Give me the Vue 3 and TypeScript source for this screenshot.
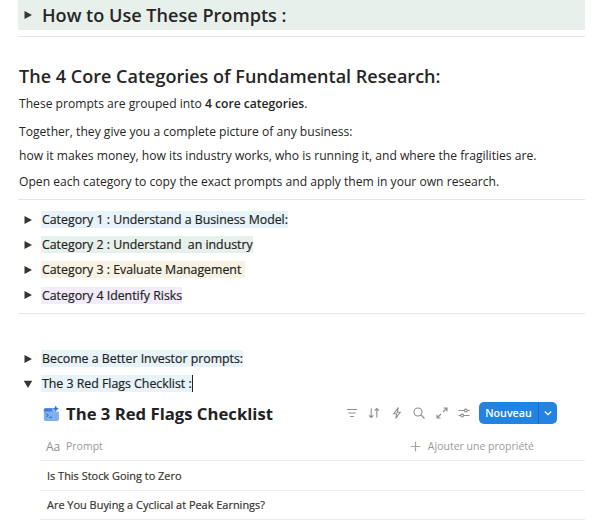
<script setup lang="ts">
const categories = [
  { label: 'Category 1 : Understand a Business Model:', tone: 'blue' },
  { label: 'Category 2 : Understand  an industry', tone: 'green' },
  { label: 'Category 3 : Evaluate Management ', tone: 'yellow' },
  { label: 'Category 4 Identify Risks', tone: 'purple' }
]

const rows = ['Is This Stock Going to Zero', 'Are You Buying a Cyclical at Peak Earnings?']
</script>

<template>
  <div class="page">
    <div class="top-toggle">
      <svg class="arrow" viewBox="0 0 10 10"><path d="M1.500 .9 9 5 1.500 9.100z" /></svg>
      <span>How to Use These Prompts :</span>
    </div>
    <div class="rule first"></div>

    <h2>The 4 Core Categories of Fundamental Research:</h2>
    <p class="p1">These prompts are grouped into <b>4 core categories</b>.</p>
    <p class="p2">Together, they give you a complete picture of any business:</p>
    <p class="p3">how it makes money, how its industry works, who is running it, and where the fragilities are.</p>
    <p class="p4">Open each category to copy the exact prompts and apply them in your own research.</p>
    <div class="rule second"></div>

    <ul class="toggles">
      <li v-for="c in categories" :key="c.label">
        <svg class="arrow" viewBox="0 0 10 10"><path d="M1.500 .9 9 5 1.500 9.100z" /></svg>
        <span class="mark" :class="c.tone">{{ c.label }}</span>
      </li>
    </ul>
    <div class="rule third"></div>

    <ul class="toggles lower">
      <li>
        <svg class="arrow" viewBox="0 0 10 10"><path d="M1.500 .9 9 5 1.500 9.100z" /></svg>
        <span class="mark blue">Become a Better Investor prompts:</span>
      </li>
      <li>
        <svg class="arrow" viewBox="0 0 10 10"><path d="M.8 1.800h8.400L5 9z" /></svg>
        <span class="mark blue caret">The 3 Red Flags Checklist :</span>
      </li>
    </ul>

    <section class="db">
      <div class="db-head">
        <svg class="db-icon" viewBox="0 0 16 16">
          <path d="M2.300 3h7.200l1 1.800c.3.600.8 1 1.500 1.200l2 .4h1v7.100c0 .9-.7 1.500-1.500 1.500H2.300c-.8 0-1.500-.6-1.500-1.500V4.500c0-.8.7-1.500 1.500-1.500z" fill="#7fb0ee" />
          <path d="M2.300 3h6.300v3.200H.8V4.500c0-.8.700-1.500 1.500-1.500z" fill="#3f7fd8" />
          <path d="M12 .5l.9 2.200 2.200.9-2.200.9-.9 2.200-.9-2.200-2.200-.9 2.200-.9z" fill="#2f74d0" />
          <path d="M3.200 8.300 5 9.800l-1.800 1.500M6 11.500h2.500" fill="none" stroke="#1f5fb8" stroke-width=".9" />
        </svg>
        <span class="db-title">The 3 Red Flags Checklist</span>
        <div class="tools">
          <svg viewBox="0 0 14 14"><path d="M2 3.500h10M3.500 7h7M5.200 10.500h3.600" /></svg>
          <svg viewBox="0 0 14 14"><path d="M4.200 2.500v9M2 9.300l2.200 2.200 2.200-2.200M9.800 11.500v-9M7.600 4.700l2.200-2.200 2.200 2.200" /></svg>
          <svg viewBox="0 0 14 14"><path d="M8.300 1.500 3.800 7.800h2.900l-1 4.700 4.500-6.300H7.300z" /></svg>
          <svg viewBox="0 0 14 14"><circle cx="6" cy="6" r="4" /><path d="m9 9 3.500 3.500" /></svg>
          <svg viewBox="0 0 14 14"><path d="M8.500 2H12v3.500M12 2 8 6M5.500 12H2V8.500M2 12l4-4" /></svg>
          <svg viewBox="0 0 14 14"><path d="M1.500 4.500h11M1.500 9.500h11" /><circle cx="8.800" cy="4.500" r="1.400" fill="#fff" /><circle cx="5.200" cy="9.500" r="1.400" fill="#fff" /></svg>
        </div>
        <div class="new-btn">
          <span class="new-label">Nouveau</span>
          <span class="new-drop">
            <svg viewBox="0 0 10 10"><path d="m1.800 3.500 3.200 3.200 3.200-3.200" /></svg>
          </span>
        </div>
      </div>

      <div class="row head-row">
        <span class="aa">Aa</span>
        <span class="col-name">Prompt</span>
        <span class="add">
          <svg viewBox="0 0 12 12"><path d="M6 .8v10.400M.8 6h10.400" /></svg>
          Ajouter une propriété
        </span>
      </div>
      <div v-for="r in rows" :key="r" class="row item">{{ r }}</div>
    </section>
  </div>
</template>

<style>
html, body {
  background: #fff;
  overflow: hidden;
}
</style>

<style scoped>
.page {
  height: 528px;
  overflow: hidden;
  padding: 0 25px 0 18px;
  font-family: "Open Sans", "Noto Sans", sans-serif;
  color: #262625;
  box-sizing: border-box;
}
.arrow {
  width: 10px;
  height: 10px;
  flex: none;
  fill: #37352f;
}
.top-toggle {
  height: 30px;
  background: #e8f0ec;
  display: flex;
  align-items: center;
  padding-left: 5px;
  gap: 9px;
  font-size: 18.100px;
  font-weight: 600;
}
.rule {
  height: 1px;
  background: #e6e6e4;
}
.rule.first { margin-top: 6px; }
h2 {
  margin: 27px 0 0 1px;
  font-size: 18.050px;
  line-height: 24px;
  font-weight: 600;
}
p {
  margin: 0 0 0 1px;
  font-size: 12.120px;
  line-height: 20px;
}
p b { font-weight: 600; }
.p1 { margin-top: 6px; }
.p2 { margin-top: 8px; }
.p3 { margin-top: 4px; }
.p4 { margin-top: 6px; }
.rule.second { margin-top: 7px; }
.toggles {
  list-style: none;
  margin: 7px 0 0;
  padding: 0;
}
.toggles li {
  height: 25.200px;
  display: flex;
  align-items: center;
  padding-left: 5px;
  gap: 8px;
}
.mark {
  padding-left: 1px;
  font-size: 12.340px;
  line-height: 17px;
  color: #1f1f1e;
  -webkit-text-stroke: 0.2px #1f1f1e;
  white-space: pre;
}
.blue { background: #e7f3f8; }
.green { background: #e8f0ec; }
.yellow { background: #f8f2e2; }
.purple { background: #f2ebf8; }
.caret { border-right: 1px solid #222; }
.rule.third { margin-top: 5.200px; }
.toggles.lower { margin-top: 32px; }
.db {
  margin: 2px 0 0 22px;
}
.db-head {
  height: 30px;
  padding-right: 28px;
  display: flex;
  align-items: center;
}
.db-icon {
  width: 17px;
  height: 17px;
  margin-left: 3px;
  flex: none;
}
.db-title {
  margin-left: 6px;
  font-size: 16.700px;
  font-weight: 700;
  color: #222;
}
.tools {
  margin-left: auto;
  display: flex;
  gap: 8.400px;
}
.tools svg {
  width: 14px;
  height: 14px;
  fill: none;
  stroke: #8f8e8b;
  stroke-width: 1.100;
}
.new-btn {
  margin-left: 8px;
  width: 78px;
  height: 22px;
  border-radius: 5px;
  background: #2383e2;
  color: #fff;
  display: flex;
  align-items: center;
  font-size: 10.700px;
  font-weight: 600;
}
.new-label {
  flex: 1;
  text-align: center;
}
.new-drop {
  width: 18px;
  height: 22px;
  border-left: 1px solid #1a6cc0;
  display: flex;
  align-items: center;
  justify-content: center;
}
.new-drop svg {
  width: 10px;
  height: 10px;
  fill: none;
  stroke: #fff;
  stroke-width: 1.200;
}
.row {
  display: flex;
  align-items: center;
  border-bottom: 1px solid #ececea;
  box-sizing: border-box;
}
.head-row {
  height: 28px;
  margin-top: 5px;
  padding-bottom: 1px;
  font-size: 10.500px;
  color: #9b9a97;
}
.aa {
  margin-left: 6px;
  width: 20px;
  font-size: 12px;
  color: #8f8e8b;
}
.add {
  margin-left: auto;
  margin-right: 51px;
  display: flex;
  align-items: center;
  gap: 7px;
}
.add svg {
  width: 11px;
  height: 11px;
  fill: none;
  stroke: #a3a29f;
  stroke-width: 1.300;
}
.item {
  height: 29.500px;
  padding-left: 7px;
  padding-bottom: 1px;
  font-size: 10.950px;
  color: #37352f;
  -webkit-text-stroke: 0.2px #37352f;
}
</style>
